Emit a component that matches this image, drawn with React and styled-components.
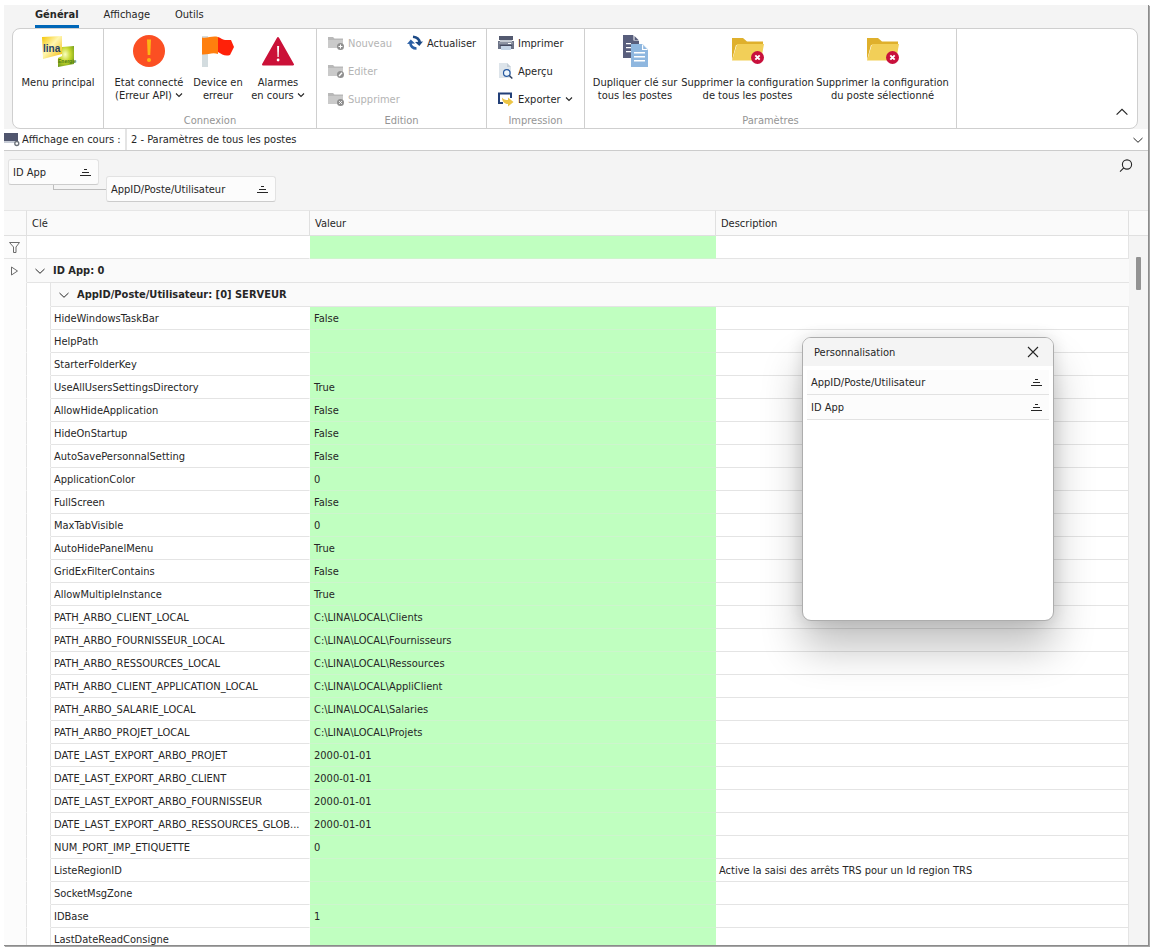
import React, { useState } from "react";
import styled, { createGlobalStyle, css } from "styled-components";

const GlobalStyle = createGlobalStyle`
  * {
    box-sizing: border-box;
  }

  body {
    margin: 0;
    background: #ffffff;
    color: #262626;
    font-family: "DejaVu Sans Condensed", "Noto Sans", sans-serif;
    font-size: 11px;
    line-height: 13px;
  }

  button, input, select {
    font: inherit;
    color: inherit;
  }

  svg {
    display: block;
    flex: none;
  }
`;

const Page = styled.div`
  height: 100vh;
  padding: 5px 1px 1px 4px;
  display: flex;
`;

const Window = styled.div`
  flex: 1;
  min-width: 0;
  display: flex;
  flex-direction: column;
  overflow: hidden;
  background: #f4f4f4;
  border-right: 1px solid #8c8c8c;
  border-bottom: 1px solid #8c8c8c;
  box-shadow: 1px 1px 1px rgba(0, 0, 0, 0.35);
`;

/* Ribbon */

const Tabs = styled.nav`
  display: flex;
  gap: 25px;
  height: 23px;
  padding-left: 31px;
`;

const Tab = styled.button`
  height: 23px;
  padding: 0 0 2px;
  border: none;
  border-bottom: 3px solid ${({ $active }) => ($active ? "#0067b8" : "transparent")};
  background: none;
  font-weight: ${({ $active }) => ($active ? "bold" : "normal")};
  cursor: pointer;
`;

const Ribbon = styled.section`
  display: flex;
  height: 101px;
  margin: 0 10px 0 8px;
  background: #ffffff;
  border: 1px solid #cfcfcf;
  border-radius: 8px;
`;

const Group = styled.div`
  width: ${({ $width }) => $width}px;
  display: flex;
  flex-direction: column;
  border-right: 1px solid #cfcfcf;
`;

const GroupBody = styled.div`
  flex: 1;
  display: flex;
  padding-left: ${({ $pad }) => $pad || 5}px;
`;

const Caption = styled.div`
  height: 15px;
  padding-top: 1px;
  color: #959595;
  text-align: center;
`;

const Column = styled.div`
  display: flex;
  flex-direction: column;
  width: ${({ $width }) => $width}px;
`;

const BigButton = styled.button`
  width: ${({ $width }) => $width}px;
  padding: 6px 0 0;
  border: none;
  background: none;
  display: flex;
  flex-direction: column;
  align-items: center;
  gap: 9px;
  white-space: nowrap;
  cursor: pointer;
`;

const BigLabel = styled.span`
  display: block;

  svg {
    display: inline-block;
    margin-left: 3px;
  }
`;

const SmallButton = styled.button`
  height: 28px;
  padding: 0;
  border: none;
  background: none;
  display: flex;
  align-items: center;
  gap: 4px;
  white-space: nowrap;
  cursor: pointer;

  &:disabled {
    color: #b4b4b4;
    cursor: default;
  }
`;

const RibbonEnd = styled.div`
  flex: 1;
  display: flex;
  align-items: flex-end;
  justify-content: flex-end;
  padding: 0 9px 10px 0;
`;

const IconButton = styled.button`
  padding: 0;
  border: none;
  background: none;
  cursor: pointer;
`;

/* View selector */

const ViewBar = styled.div`
  display: flex;
  height: 22px;
  background: #ffffff;
  border-bottom: 1px solid #cccccc;
`;

const ViewLabel = styled.label`
  width: 123px;
  display: flex;
  align-items: center;
  gap: 2px;
  border-right: 2px solid #e4e4e4;
  white-space: nowrap;
`;

const SelectWrap = styled.div`
  flex: 1;
  display: flex;
  align-items: center;
  padding-right: 5px;
`;

const Select = styled.select`
  flex: 1;
  height: 20px;
  padding: 0 4px;
  border: none;
  background: none;
  appearance: none;
`;

/* Group panel */

const GroupPanel = styled.div`
  display: flex;
  align-items: flex-start;
  gap: 7px;
  height: 59px;
  padding: 8px 15px 0 4px;
`;

const Chip = styled.button`
  position: relative;
  width: ${({ $width }) => $width}px;
  height: 26px;
  margin-top: ${({ $drop }) => ($drop ? 17 : 0)}px;
  padding: 0 7px 0 4px;
  display: flex;
  align-items: center;
  justify-content: space-between;
  border: 1px solid #e2e2e2;
  border-bottom-color: #cccccc;
  border-radius: 3px;
  background: #fcfcfc;
  cursor: pointer;

  ${({ $linked }) =>
    $linked &&
    css`
      &::after {
        content: "";
        position: absolute;
        left: 44px;
        top: 25px;
        width: 53px;
        height: 4px;
        border-left: 1px solid #bdbdbd;
        border-bottom: 1px solid #bdbdbd;
      }
    `}
`;

const SearchButton = styled(IconButton)`
  margin-left: auto;
`;

/* Grid */

const GridArea = styled.div`
  flex: 1;
  min-height: 0;
  display: flex;
  overflow: hidden;
`;

const Grid = styled.table`
  flex: 1;
  min-width: 0;
  height: max-content;
  table-layout: fixed;
  border-collapse: separate;
  border-spacing: 0;
  background: #ffffff;
`;

const Head = styled.th`
  height: 26px;
  padding: 0 5px;
  background: #fafafa;
  border-top: 1px solid #e6e6e6;
  border-bottom: 1px solid #e0e0e0;
  border-right: 1px solid #e0e0e0;
  font-weight: normal;
  text-align: left;
`;

const Cell = styled.td`
  height: 23px;
  padding: 0 4px 0 3px;
  border-bottom: 1px solid #e4e4e4;
  border-right: 1px solid ${({ $edge }) => ($edge ? "#e4e4e4" : "transparent")};
  background-clip: padding-box;
  white-space: nowrap;
  overflow: hidden;
  text-overflow: ellipsis;
`;

const ValueCell = styled(Cell)`
  padding-left: 4px;
  background: #c0ffc0;
  border-bottom-color: #cdf5cd;
  border-right: none;
`;

const Gutter = styled.td`
  padding: 0;
  background: ${({ $plain }) => ($plain ? "#ffffff" : "#fcfcfc")};
  border-right: 1px solid #e4e4e4;
  border-bottom: 1px solid ${({ $line }) => ($line ? "#e4e4e4" : "transparent")};

  svg {
    margin: 0 auto;
  }
`;

const GroupCell = styled.td`
  height: 24px;
  padding: 0;
  background: #fafafa;
  border-bottom: 1px solid #e4e4e4;
  font-weight: bold;
`;

const GroupToggle = styled.button`
  height: 23px;
  padding: 0 0 0 8px;
  border: none;
  background: none;
  display: flex;
  align-items: center;
  gap: 8px;
  cursor: pointer;
`;

const FilterInput = styled.input`
  display: block;
  width: 100%;
  height: 20px;
  padding: 0;
  border: none;
  background: none;
  outline: none;
`;

const ScrollTrack = styled.div`
  width: 19px;
  display: flex;
  flex-direction: column;
  align-items: center;
`;

const ScrollCorner = styled.div`
  align-self: stretch;
  height: 26px;
  margin-bottom: 21px;
  background: #fafafa;
  border-top: 1px solid #e6e6e6;
  border-bottom: 1px solid #e0e0e0;
`;

const ScrollThumb = styled.div`
  width: 5px;
  height: 33px;
  background: #929292;
  border-radius: 1px;
`;

/* Floating panel */

const Dialog = styled.section`
  position: absolute;
  left: 802px;
  top: 337px;
  width: 252px;
  height: 284px;
  overflow: hidden;
  background: #ffffff;
  border: 1px solid #adadad;
  border-radius: 9px;
  box-shadow: 0 28px 42px rgba(0, 0, 0, 0.24), 0 0 16px rgba(0, 0, 0, 0.12);
`;

const DialogHeader = styled.header`
  display: flex;
  align-items: center;
  justify-content: space-between;
  height: 28px;
  padding: 0 14px 0 11px;
  background: #f4f4f4;
`;

const DialogTitle = styled.h2`
  margin: 0;
  font-size: 11px;
  font-weight: normal;
`;

const FieldList = styled.div`
  display: flex;
  flex-direction: column;
  padding: 4px;
`;

const Field = styled.button`
  height: 25px;
  padding: 0 7px 0 4px;
  display: flex;
  align-items: center;
  justify-content: space-between;
  border: none;
  border-bottom: 1px solid #e2e2e2;
  background: #fcfcfc;
  cursor: pointer;
`;

/* Icons */

const Chevron = ({ size = 10, up, color = "#262626" }) => (
  <svg width={size} height={size} viewBox="0 0 10 10" fill="none" stroke={color} strokeWidth="1">
    <path d={up ? "M0.5 7.2 5 2.7l4.5 4.5" : "M0.5 3 5 7.3 9.5 3"} />
  </svg>
);

const SmallChevron = () => (
  <svg width="8" height="8" viewBox="0 0 8 8" fill="none" stroke="#262626" strokeWidth="1.1">
    <path d="M1 2.5 4 5.5l3-3" />
  </svg>
);

const SortIcon = () => (
  <svg width="11" height="9" viewBox="0 0 11 9" fill="#262626" shapeRendering="crispEdges">
    <path d="M4 1h3v1H4zM2 4h7v1H2zM0 7h11v1H0z" />
  </svg>
);

const LinaLogo = () => (
  <svg width="32" height="32" viewBox="0 0 32 32" overflow="visible">
    <defs>
      <linearGradient id="linaYellow" x1="0" y1="0" x2="1" y2="1">
        <stop offset="0" stopColor="#f5c400" />
        <stop offset="0.45" stopColor="#fff6b0" />
        <stop offset="1" stopColor="#f0b800" />
      </linearGradient>
      <radialGradient id="linaGreen" cx="0.45" cy="0.4" r="0.7">
        <stop offset="0" stopColor="#fbffc0" />
        <stop offset="0.5" stopColor="#c4d62c" />
        <stop offset="1" stopColor="#6f9a1c" />
      </radialGradient>
    </defs>
    <path d="M0 2 20 1v18L1 24z" fill="url(#linaYellow)" />
    <path d="M20 12 32 11v18l-16 3v-9l4-2z" fill="url(#linaGreen)" />
    <text x="1" y="17" fontSize="10" fontWeight="bold" fill="#24406a" fontFamily="Liberation Sans">lina</text>
    <text x="16" y="28" fontSize="5" fontWeight="bold" fill="#4c7a12" fontFamily="Liberation Sans Narrow, Liberation Sans">Energie</text>
  </svg>
);

const ErrorIcon = () => (
  <svg width="32" height="32" viewBox="0 0 32 32">
    <circle cx="16" cy="16" r="16" fill="#fb4f23" />
    <path d="M14 4.500h4l-0.700 15.500h-2.600z" fill="#fdb515" />
    <circle cx="16" cy="25" r="2" fill="#fdb515" />
  </svg>
);

const FlagIcon = () => (
  <svg width="32" height="32" viewBox="0 0 32 32">
    <path d="M0 1h6v31H0z" fill="#d3dcdf" />
    <path d="M0 2.500C6 3.500 10 0.500 16 2v17c-6-2-10 1-16 0.500z" fill="#ff7f0e" />
    <path d="M16 2c3 1 4 2.500 7 3h6l3 7-4 8c-5 1.500-8-0.500-12-3z" fill="#ff2109" />
  </svg>
);

const AlarmIcon = () => (
  <svg width="32" height="32" viewBox="0 0 32 32">
    <path d="M16 3 31 29.500H1z" fill="#cb1138" stroke="#cb1138" strokeWidth="2" strokeLinejoin="round" />
    <path d="M15.100 11h2l-0.400 11h-1.200z" fill="#ffffff" />
    <circle cx="16.100" cy="25" r="1.400" fill="#ffffff" />
  </svg>
);

const FolderIcon = ({ badge }) => (
  <svg width="16" height="16" viewBox="0 0 16 16">
    <path d="M0 2h5l1.500 1.500H15V8H6v5H0z" fill="#b9b9b9" />
    <path d="M0 13V5h15v8z" fill="#cacaca" />
    <circle cx="12.500" cy="11.500" r="3.500" fill="#8f8f8f" />
    {badge === "plus" && <path d="M12.500 9.500v4M10.500 11.500h4" stroke="#fff" />}
    {badge === "pen" && <path d="m11 13 3-3.200" stroke="#fff" strokeWidth="1.400" />}
    {badge === "cross" && <path d="m11.200 10.200 2.600 2.600m0-2.600-2.600 2.600" stroke="#fff" />}
  </svg>
);

const RefreshIcon = () => (
  <svg width="16" height="16" viewBox="0 0 16 16">
    <path d="M0 9 3.800 4.500 8 8.500z" fill="#2a5fa5" />
    <path d="M3.300 8C3.800 11.500 6 13.500 9.500 13.500" fill="none" stroke="#2a5fa5" strokeWidth="2.600" />
    <path d="M16 6.500 12.300 11 8 7z" fill="#1d4a86" />
    <path d="M12.700 7.500C12.200 4 10 2.200 6 1.800" fill="none" stroke="#1d4a86" strokeWidth="2.600" />
  </svg>
);

const PrinterIcon = () => (
  <svg width="16" height="16" viewBox="0 0 16 16">
    <path d="M1 1h14v4H1z" fill="#53596f" />
    <path d="M2 5h12v2H2z" fill="#c3c9d1" />
    <path d="M0 6h2v1h12V6h2v8H0z" fill="#6c7387" />
    <path d="M1 7h14v2H1z" fill="#8d94a3" />
    <path d="M10 8h3v1h-3z" fill="#ffffff" />
    <path d="M3 10h10v5H3z" fill="#c4d4e6" />
    <path d="M2 10h12v1H2z" fill="#454b60" />
  </svg>
);

const PreviewIcon = () => (
  <svg width="16" height="16" viewBox="0 0 16 16">
    <path d="M1 0h8l4 4v11H1z" fill="#dde4ea" />
    <path d="M9 0v4h4z" fill="#c3cdd6" />
    <circle cx="8.800" cy="10" r="3.300" fill="#eef6fc" stroke="#2558a0" strokeWidth="1.200" />
    <path d="m11.300 12.500 3 3" stroke="#2c3c5c" strokeWidth="1.400" />
  </svg>
);

const ExportIcon = () => (
  <svg width="16" height="16" viewBox="0 0 16 16">
    <path d="M13 7V2.500H1V12h4" fill="none" stroke="#223f78" strokeWidth="2" />
    <path d="M4 6.500C5.500 8.500 7.500 9 10 9V6.500l5.500 4.500-5.500 4.500V13C6.500 13 4 10.500 4 6.500z" fill="#ecc546" />
  </svg>
);

const CopyIcon = () => (
  <svg width="32" height="32" viewBox="0 0 32 32">
    <path d="M4 0h10l6 6v17H4z" fill="#585e7c" />
    <path d="M14.500 0v5.500H20zM7 8h5v1.300H7zM7 12h5v1.300H7zM7 16h5v1.300H7z" fill="#ffffff" />
    <path d="M15.500 1 19.500 5h-4z" fill="#585e7c" />
    <path d="M12 9h11.500l5.500 5.500V32H12z" fill="#8fb7df" />
    <path d="M23 9v6h6zM15 17h11v1.400H15zM15 21h11v1.400H15zM15 25h11v1.400H15z" fill="#ffffff" />
    <path d="M24.200 10.300 27.700 14h-3.500z" fill="#8fb7df" />
  </svg>
);

const FolderDeleteIcon = () => (
  <svg width="32" height="32" viewBox="0 0 32 32">
    <path d="M0 3h11l4 3.500h16V10H4L0 25z" fill="#dfb02c" />
    <path d="M5 9h27l-3 16.500H0z" fill="#f2cf58" />
    <circle cx="25.500" cy="22.500" r="6.500" fill="#c8103c" />
    <path d="m23.300 20.300 4.400 4.400m0-4.400-4.400 4.400" stroke="#ffffff" strokeWidth="1.900" />
  </svg>
);

const ViewIcon = () => (
  <svg width="16" height="16" viewBox="0 0 16 16">
    <path d="M0 1h14v8H0z" fill="#50566e" />
    <path d="M0 9h11v2H0z" fill="#c7ccd6" />
    <circle cx="12.800" cy="11.500" r="2" fill="#ffffff" stroke="#6a7078" strokeWidth="1.300" />
  </svg>
);

const SearchIcon = () => (
  <svg width="14" height="14" viewBox="0 0 14 14" fill="none" stroke="#262626" strokeWidth="1.100">
    <circle cx="8" cy="5.500" r="4.600" />
    <path d="M4.800 8.800 1 12.600" />
  </svg>
);

const FunnelIcon = () => (
  <svg width="12" height="12" viewBox="0 0 12 12" fill="none" stroke="#6c6c6c">
    <path d="M0.500 1.500h10L7 6v5.500H4.500V6z" />
  </svg>
);

const RowMarker = () => (
  <svg width="12" height="10" viewBox="0 0 12 10" fill="none" stroke="#6c6c6c">
    <path d="M2.500 1v8l6-4z" />
  </svg>
);

const CloseIcon = () => (
  <svg width="12" height="12" viewBox="0 0 12 12" stroke="#262626" strokeWidth="1.100">
    <path d="m1 1 10 10M11 1 1 11" />
  </svg>
);

const rows = [
  { key: "HideWindowsTaskBar", value: "False" },
  { key: "HelpPath" },
  { key: "StarterFolderKey" },
  { key: "UseAllUsersSettingsDirectory", value: "True" },
  { key: "AllowHideApplication", value: "False" },
  { key: "HideOnStartup", value: "False" },
  { key: "AutoSavePersonnalSetting", value: "False" },
  { key: "ApplicationColor", value: "0" },
  { key: "FullScreen", value: "False" },
  { key: "MaxTabVisible", value: "0" },
  { key: "AutoHidePanelMenu", value: "True" },
  { key: "GridExFilterContains", value: "False" },
  { key: "AllowMultipleInstance", value: "True" },
  { key: "PATH_ARBO_CLIENT_LOCAL", value: "C:\\LINA\\LOCAL\\Clients" },
  { key: "PATH_ARBO_FOURNISSEUR_LOCAL", value: "C:\\LINA\\LOCAL\\Fournisseurs" },
  { key: "PATH_ARBO_RESSOURCES_LOCAL", value: "C:\\LINA\\LOCAL\\Ressources" },
  { key: "PATH_ARBO_CLIENT_APPLICATION_LOCAL", value: "C:\\LINA\\LOCAL\\AppliClient" },
  { key: "PATH_ARBO_SALARIE_LOCAL", value: "C:\\LINA\\LOCAL\\Salaries" },
  { key: "PATH_ARBO_PROJET_LOCAL", value: "C:\\LINA\\LOCAL\\Projets" },
  { key: "DATE_LAST_EXPORT_ARBO_PROJET", value: "2000-01-01" },
  { key: "DATE_LAST_EXPORT_ARBO_CLIENT", value: "2000-01-01" },
  { key: "DATE_LAST_EXPORT_ARBO_FOURNISSEUR", value: "2000-01-01" },
  { key: "DATE_LAST_EXPORT_ARBO_RESSOURCES_GLOB...", value: "2000-01-01" },
  { key: "NUM_PORT_IMP_ETIQUETTE", value: "0" },
  { key: "ListeRegionID", description: "Active la saisi des arrêts TRS pour un Id region TRS" },
  { key: "SocketMsgZone" },
  { key: "IDBase", value: "1" },
  { key: "LastDateReadConsigne" },
];

const tabs = ["Général", "Affichage", "Outils"];

const App = () => {
  const [activeTab, setActiveTab] = useState("Général");
  const [filters, setFilters] = useState({ key: "", value: "", description: "" });
  const [appOpen, setAppOpen] = useState(true);
  const [posteOpen, setPosteOpen] = useState(true);
  const [dialogOpen, setDialogOpen] = useState(true);

  const changeFilter = (name) => (e) => setFilters({ ...filters, [name]: e.target.value });

  const visibleRows = rows.filter((row) =>
    Object.keys(filters).every((name) =>
      (row[name] || "").toLowerCase().includes(filters[name].toLowerCase())
    )
  );

  return (
    <Page>
      <GlobalStyle />
      <Window>
        <Tabs>
          {tabs.map((tab) => (
            <Tab key={tab} $active={tab === activeTab} onClick={() => setActiveTab(tab)}>
              {tab}
            </Tab>
          ))}
        </Tabs>

        <Ribbon>
          <Group $width={91}>
            <GroupBody>
              <BigButton $width={80}>
                <LinaLogo />
                <BigLabel>Menu principal</BigLabel>
              </BigButton>
            </GroupBody>
          </Group>
          <Group $width={213}>
            <GroupBody>
              <BigButton $width={80}>
                <ErrorIcon />
                <BigLabel>
                  Etat connecté
                  <br />
                  (Erreur API)
                  <SmallChevron />
                </BigLabel>
              </BigButton>
              <BigButton $width={58}>
                <FlagIcon />
                <BigLabel>
                  Device en
                  <br />
                  erreur
                </BigLabel>
              </BigButton>
              <BigButton $width={62}>
                <AlarmIcon />
                <BigLabel>
                  Alarmes
                  <br />
                  en cours
                  <SmallChevron />
                </BigLabel>
              </BigButton>
            </GroupBody>
            <Caption>Connexion</Caption>
          </Group>
          <Group $width={170}>
            <GroupBody $pad={11}>
              <Column $width={79}>
                <SmallButton disabled>
                  <FolderIcon badge="plus" />
                  Nouveau
                </SmallButton>
                <SmallButton disabled>
                  <FolderIcon badge="pen" />
                  Editer
                </SmallButton>
                <SmallButton disabled>
                  <FolderIcon badge="cross" />
                  Supprimer
                </SmallButton>
              </Column>
              <Column $width={79}>
                <SmallButton>
                  <RefreshIcon />
                  Actualiser
                </SmallButton>
              </Column>
            </GroupBody>
            <Caption>Edition</Caption>
          </Group>
          <Group $width={98}>
            <GroupBody $pad={11}>
              <Column $width={80}>
                <SmallButton>
                  <PrinterIcon />
                  Imprimer
                </SmallButton>
                <SmallButton>
                  <PreviewIcon />
                  Aperçu
                </SmallButton>
                <SmallButton>
                  <ExportIcon />
                  Exporter
                  <SmallChevron />
                </SmallButton>
              </Column>
            </GroupBody>
            <Caption>Impression</Caption>
          </Group>
          <Group $width={372}>
            <GroupBody>
              <BigButton $width={90}>
                <CopyIcon />
                <BigLabel>
                  Dupliquer clé sur
                  <br />
                  tous les postes
                </BigLabel>
              </BigButton>
              <BigButton $width={135}>
                <FolderDeleteIcon />
                <BigLabel>
                  Supprimer la configuration
                  <br />
                  de tous les postes
                </BigLabel>
              </BigButton>
              <BigButton $width={135}>
                <FolderDeleteIcon />
                <BigLabel>
                  Supprimer la configuration
                  <br />
                  du poste sélectionné
                </BigLabel>
              </BigButton>
            </GroupBody>
            <Caption>Paramètres</Caption>
          </Group>
          <RibbonEnd>
            <IconButton aria-label="Réduire le ruban">
              <Chevron size={12} up />
            </IconButton>
          </RibbonEnd>
        </Ribbon>

        <ViewBar>
          <ViewLabel htmlFor="view">
            <ViewIcon />
            Affichage en cours :
          </ViewLabel>
          <SelectWrap>
            <Select id="view" defaultValue="2">
              <option value="2">2 - Paramètres de tous les postes</option>
            </Select>
            <Chevron />
          </SelectWrap>
        </ViewBar>

        <GroupPanel>
          <Chip $width={91} $linked>
            ID App
            <SortIcon />
          </Chip>
          <Chip $width={170} $drop>
            AppID/Poste/Utilisateur
            <SortIcon />
          </Chip>
          <SearchButton aria-label="Rechercher">
            <SearchIcon />
          </SearchButton>
        </GroupPanel>

        <GridArea>
          <Grid>
            <colgroup>
              <col width="23" />
              <col width="24" />
              <col width="259" />
              <col width="406" />
              <col />
            </colgroup>
            <thead>
              <tr>
                <Head />
                <Head colSpan={2}>Clé</Head>
                <Head>Valeur</Head>
                <Head>Description</Head>
              </tr>
            </thead>
            <tbody>
              <tr>
                <Gutter $line>
                  <FunnelIcon />
                </Gutter>
                <Cell colSpan={2}>
                  <FilterInput aria-label="Filtrer Clé" value={filters.key} onChange={changeFilter("key")} />
                </Cell>
                <ValueCell>
                  <FilterInput aria-label="Filtrer Valeur" value={filters.value} onChange={changeFilter("value")} />
                </ValueCell>
                <Cell $edge>
                  <FilterInput
                    aria-label="Filtrer Description"
                    value={filters.description}
                    onChange={changeFilter("description")}
                  />
                </Cell>
              </tr>
              <tr>
                <Gutter>
                  <RowMarker />
                </Gutter>
                <GroupCell colSpan={4}>
                  <GroupToggle onClick={() => setAppOpen(!appOpen)}>
                    <Chevron />
                    ID App: 0
                  </GroupToggle>
                </GroupCell>
              </tr>
              {appOpen && (
                <tr>
                  <Gutter />
                  <Gutter $plain />
                  <GroupCell colSpan={3}>
                    <GroupToggle onClick={() => setPosteOpen(!posteOpen)}>
                      <Chevron />
                      AppID/Poste/Utilisateur: [0] SERVEUR
                    </GroupToggle>
                  </GroupCell>
                </tr>
              )}
              {appOpen &&
                posteOpen &&
                visibleRows.map((row) => (
                  <tr key={row.key}>
                    <Gutter />
                    <Gutter $plain />
                    <Cell>{row.key}</Cell>
                    <ValueCell>{row.value}</ValueCell>
                    <Cell $edge>{row.description}</Cell>
                  </tr>
                ))}
            </tbody>
          </Grid>
          <ScrollTrack>
            <ScrollCorner />
            <ScrollThumb />
          </ScrollTrack>
        </GridArea>

        {dialogOpen && (
          <Dialog aria-label="Personnalisation">
            <DialogHeader>
              <DialogTitle>Personnalisation</DialogTitle>
              <IconButton aria-label="Fermer" onClick={() => setDialogOpen(false)}>
                <CloseIcon />
              </IconButton>
            </DialogHeader>
            <FieldList>
              <Field>
                AppID/Poste/Utilisateur
                <SortIcon />
              </Field>
              <Field>
                ID App
                <SortIcon />
              </Field>
            </FieldList>
          </Dialog>
        )}
      </Window>
    </Page>
  );
};

export default App;
